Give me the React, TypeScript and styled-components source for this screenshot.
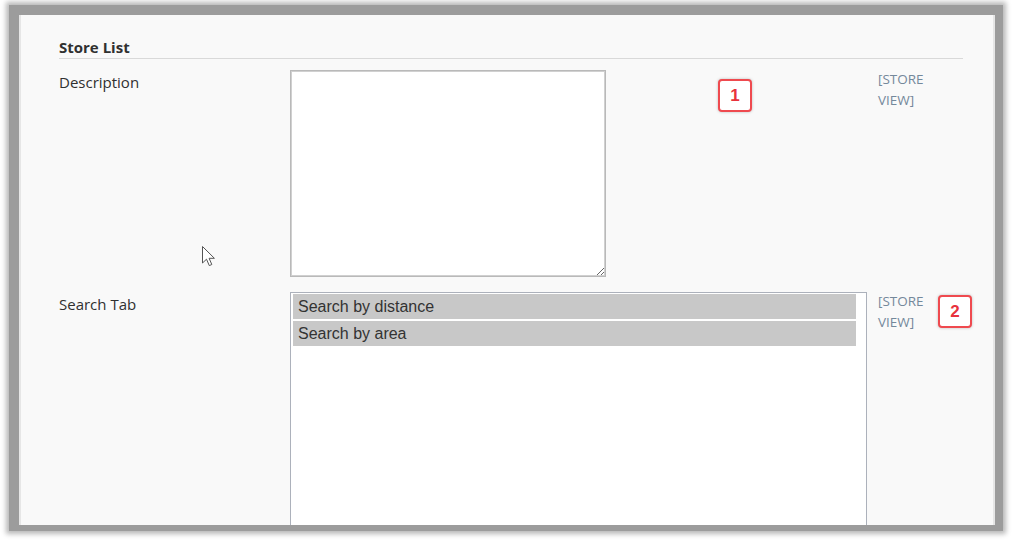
import React from "react";
import styled, { createGlobalStyle } from "styled-components";

const Global = createGlobalStyle`
  html, body { margin: 0; padding: 0; background: #ffffff; }
  body { width: 1014px; height: 541px; overflow: hidden; }
`;

const Frame = styled.div`
  margin: 5px 11px 10px 9px;
  padding: 10px 8px 6px 10px;
  background: #9c9c9c;
  box-shadow: 0 0 5px 3px #b8b8b8;
`;

const Sheet = styled.div`
  height: 510px;
  overflow: hidden;
  background: #f9f9f9;
  border-left: 2px solid #e6e6e6;
  border-right: 2px solid #e6e6e6;
  padding: 22px 30px 0 38px;
  box-sizing: border-box;
  position: relative;
  font-family: "Open Sans", "Liberation Sans", sans-serif;
  color: #303030;
`;

const Heading = styled.h3`
  margin: 0;
  font-size: 15px;
  font-weight: 700;
  line-height: 20px;
  padding-bottom: 1px;
  border-bottom: 1px solid #d9d9d9;
  color: #303030;
`;

const Row = styled.div<{ $top: number }>`
  display: grid;
  grid-template-columns: 231px 588px 1fr;
  margin-top: ${(p) => p.$top}px;
  align-items: start;
`;

const Label = styled.div`
  font-size: 15px;
  line-height: 22px;
  padding-top: 1px;
`;

const Scope = styled.div`
  font-size: 13.5px;
  line-height: 21px;
  color: #74889b;
  width: 60px;
  margin-top: -1px;
`;

const TextArea = styled.textarea`
  width: 316px;
  height: 207px;
  box-sizing: border-box;
  border: 1px solid #b9b9b9;
  outline: 1px solid #d0d0d0;
  outline-offset: -2px;
  background: #ffffff;
  margin: 0;
  display: block;
`;

const ListBox = styled.div`
  width: 577px;
  height: 260px;
  box-sizing: border-box;
  border: 1px solid #acb1bb;
  background: #ffffff;
  padding: 1px 10px 0 2px;
`;

const Option = styled.div`
  background: #c8c8c8;
  font-family: "Liberation Sans", Arial, sans-serif;
  font-size: 16px;
  line-height: 25px;
  color: #333333;
  padding-left: 5px;
  margin-bottom: 2px;
`;

const Badge = styled.div<{ $x: number; $y: number }>`
  position: absolute;
  left: ${(p) => p.$x}px;
  top: ${(p) => p.$y}px;
  width: 34px;
  height: 33px;
  box-sizing: border-box;
  border: 2px solid #ef4a4f;
  border-radius: 4px;
  background: #ffffff;
  box-shadow: 0 0 3px rgba(0, 0, 0, 0.25);
  display: flex;
  align-items: center;
  justify-content: center;
  font-family: "Liberation Sans", Arial, sans-serif;
  font-weight: 700;
  font-size: 17px;
  color: #e8323c;
`;

const Cursor = styled.svg`
  position: absolute;
  left: 180px;
  top: 230px;
`;

export default function App() {
  return (
    <>
      <Global />
      <Frame>
        <Sheet>
          <Heading>Store List</Heading>
          <Row $top={11}>
            <Label>Description</Label>
            <TextArea aria-label="Description" />
            <Scope>[STORE VIEW]</Scope>
          </Row>
          <Row $top={15}>
            <Label>Search Tab</Label>
            <ListBox role="listbox" aria-label="Search Tab">
              <Option role="option">Search by distance</Option>
              <Option role="option">Search by area</Option>
            </ListBox>
            <Scope>[STORE VIEW]</Scope>
          </Row>
          <Badge $x={697} $y={64}>1</Badge>
          <Badge $x={917} $y={280}>2</Badge>
          <Cursor width="16" height="24" viewBox="0 0 16 24">
            <path
              d="M1.5 1.5 L1.5 18 L5.5 14.2 L8.3 20.6 L10.8 19.5 L8.1 13.3 L13.4 13.3 Z"
              fill="#ffffff"
              stroke="#555555"
              strokeWidth="1"
              strokeLinejoin="miter"
            />
          </Cursor>
        </Sheet>
      </Frame>
    </>
  );
}
